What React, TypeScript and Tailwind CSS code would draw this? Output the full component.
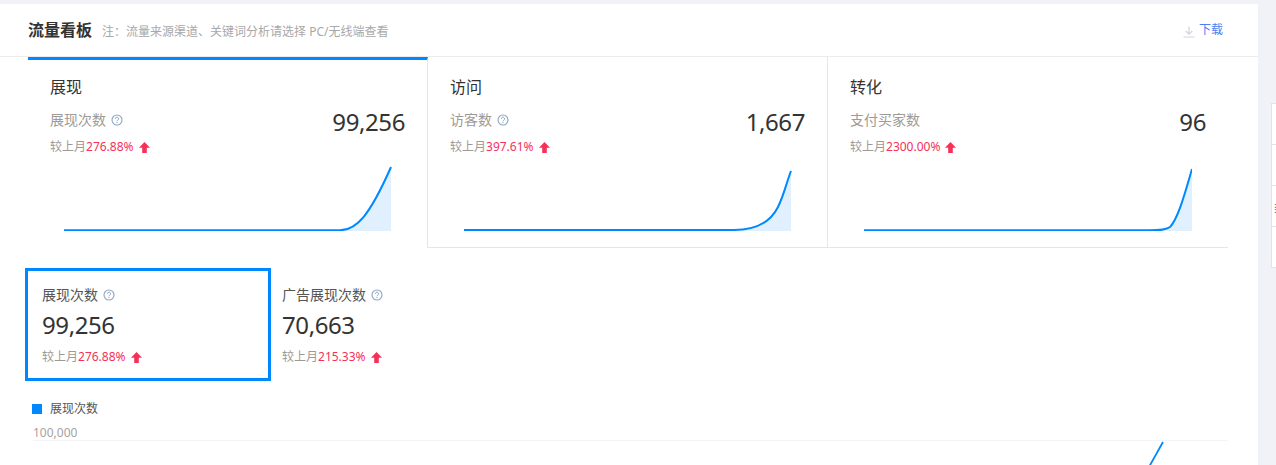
import React from "react";

const FONT = "font-['Noto_Sans','Noto_Sans_CJK_SC',sans-serif]";

const HelpIcon = () => (
  <svg width="12" height="12" viewBox="0 0 12 12" fill="none" className="shrink-0">
    <circle cx="6" cy="6" r="5" stroke="#8fa3c4" strokeWidth="1.1" />
    <path d="M4.4 4.8a1.6 1.6 0 1 1 2.5 1.3c-.6.4-.9.6-.9 1.2" stroke="#8fa3c4" strokeWidth="1" />
    <rect x="5.5" y="8" width="1" height="1" fill="#8fa3c4" />
  </svg>
);

const UpArrow = () => (
  <svg width="11" height="11" viewBox="0 0 11 11" className="shrink-0">
    <path d="M5.5 0L11 5.8H7.8V11H3.2V5.8H0Z" fill="#f5315a" />
  </svg>
);

const Compare = ({ pct }: { pct: string }) => (
  <div className="flex items-center text-xs leading-4 text-[#a09a96]">
    <span>较上月</span>
    <span className="text-[#f5315a]">{pct}</span>
    <span className="ml-[5px]">
      <UpArrow />
    </span>
  </div>
);

const Spark = ({ line, area }: { line: string; area: string }) => (
  <svg width="328" height="66" viewBox="0 0 328 66" fill="none" className="ml-9 block">
    <path d={area} fill="#e1f0ff" />
    <path d={line} stroke="#0088ff" strokeWidth="2" />
  </svg>
);

const cards = [
  {
    title: "展现",
    label: "展现次数",
    help: true,
    value: "99,256",
    pct: "276.88%",
    line: "M0 65.2H276C292 65.2 305 52 327 2",
    area: "M276 65.5C292 65.2 305 52 327 2V66H276Z",
    cls: "border-t-[3px] border-t-[#0088ff] border-r border-r-[#e6e6e6] pt-[17px]",
  },
  {
    title: "访问",
    label: "访客数",
    help: true,
    value: "1,667",
    pct: "397.61%",
    line: "M0 65H270C292 65 306 58 314 42C320 30 323 16 327 6",
    area: "M270 65.5C292 65 306 58 314 42C320 30 323 16 327 6V66H270Z",
    cls: "border-b border-[#e6e6e6] border-r pt-5",
  },
  {
    title: "转化",
    label: "支付买家数",
    help: false,
    value: "96",
    pct: "2300.00%",
    line: "M0 65.2H285C296 65.2 302 65 306 62C314 54 321 28 328 4",
    area: "M285 65.5C296 65.2 302 65 306 62C314 54 321 28 328 4V66H285Z",
    cls: "border-b border-[#e6e6e6] pt-5",
  },
];

const KpiBody = ({ label, value, pct }: { label: string; value: string; pct: string }) => (
  <>
    <div className="flex items-center gap-[5px] text-sm leading-5 text-[#555]">
      <span>{label}</span>
      <HelpIcon />
    </div>
    <div className="mt-1 text-2xl leading-8 tracking-[-0.4px] text-[#333]">{value}</div>
    <div className="mt-2">
      <Compare pct={pct} />
    </div>
  </>
);

export default function App() {
  return (
    <div className={`${FONT} flex h-[465px] w-[1276px] overflow-hidden bg-[#f0f2f7]`}>
      <div className="mt-1 flex w-[1258px] shrink-0 flex-col bg-white">
        <div className="flex h-[53px] shrink-0 items-center justify-between border-b border-[#ececec] pl-7 pr-[35px]">
          <div className="flex items-baseline">
            <h1 className="text-base font-bold text-[#333]">流量看板</h1>
            <span className="ml-[10px] text-xs text-[#a8a8a8]">注：流量来源渠道、关键词分析请选择 PC/无线端查看</span>
          </div>
          <div className="flex items-center gap-[4px] text-xs text-[#4d7ff0]">
            <svg width="12" height="12" viewBox="0 0 12 12" fill="none" className="mt-[3px]">
              <path d="M6 0.5V8M2.8 5L6 8.2L9.2 5M0.5 11H11.5" stroke="#cfd5de" strokeWidth="1.2" />
            </svg>
            <span>下载</span>
          </div>
        </div>

        <div className="ml-7 grid w-[1200px] grid-cols-3">
          {cards.map((c) => (
            <div key={c.title} className={`h-[191px] ${c.cls}`}>
              <div className="px-[22px]">
                <div className="text-base leading-5 text-[#333]">{c.title}</div>
                <div className="mt-3 flex items-start justify-between">
                  <div>
                    <div className="flex items-center gap-[5px] text-sm leading-[22px] text-[#a09a96]">
                      <span>{c.label}</span>
                      {c.help && <HelpIcon />}
                    </div>
                    <div className="mt-2">
                      <Compare pct={c.pct} />
                    </div>
                  </div>
                  <div className="-mt-[3px] text-2xl leading-8 tracking-[-0.4px] text-[#333]">{c.value}</div>
                </div>
              </div>
              <div className="mt-[10px]">
                <Spark line={c.line} area={c.area} />
              </div>
            </div>
          ))}
        </div>

        <div className="ml-[25px] mt-5 flex">
          <div className="h-[113px] w-[246px] border-[3px] border-[#0088ff] pl-[14px] pt-[14px]">
            <KpiBody label="展现次数" value="99,256" pct="276.88%" />
          </div>
          <div className="pl-[11px] pt-[17px]">
            <KpiBody label="广告展现次数" value="70,663" pct="215.33%" />
          </div>
        </div>

        <div className="ml-8 mt-5 flex items-center gap-2 text-xs text-[#555]">
          <span className="size-[10px] bg-[#0088ff]" />
          <span>展现次数</span>
        </div>

        <div className="relative ml-[33px] mt-[7px] w-[1195px]">
          <div className="h-[17px] border-b border-[#f3f4f8] pt-px text-xs leading-4 text-[#a8a29e]">100,000</div>
          <svg width="20" height="26" viewBox="0 0 20 26" fill="none" className="absolute left-[1113px] top-[17px]">
            <path d="M3 26L17 1" stroke="#0088ff" strokeWidth="1.8" />
          </svg>
        </div>
      </div>

      <div className="ml-[13px] mt-[103px] flex h-[165px] w-[5px] flex-col overflow-hidden border-l border-t border-[#e3e3e3] bg-white">
        <div className="h-[41px] shrink-0 border-b border-[#e3e3e3]" />
        <div className="h-[41px] shrink-0 border-b border-[#e3e3e3]" />
        <div className="h-[41px] shrink-0 overflow-hidden border-b border-[#e3e3e3] pl-[2px] pt-[14px] text-xs leading-4 text-[#666]">
          类
        </div>
        <div className="h-[41px] shrink-0 border-b border-[#e3e3e3]" />
      </div>
    </div>
  );
}
